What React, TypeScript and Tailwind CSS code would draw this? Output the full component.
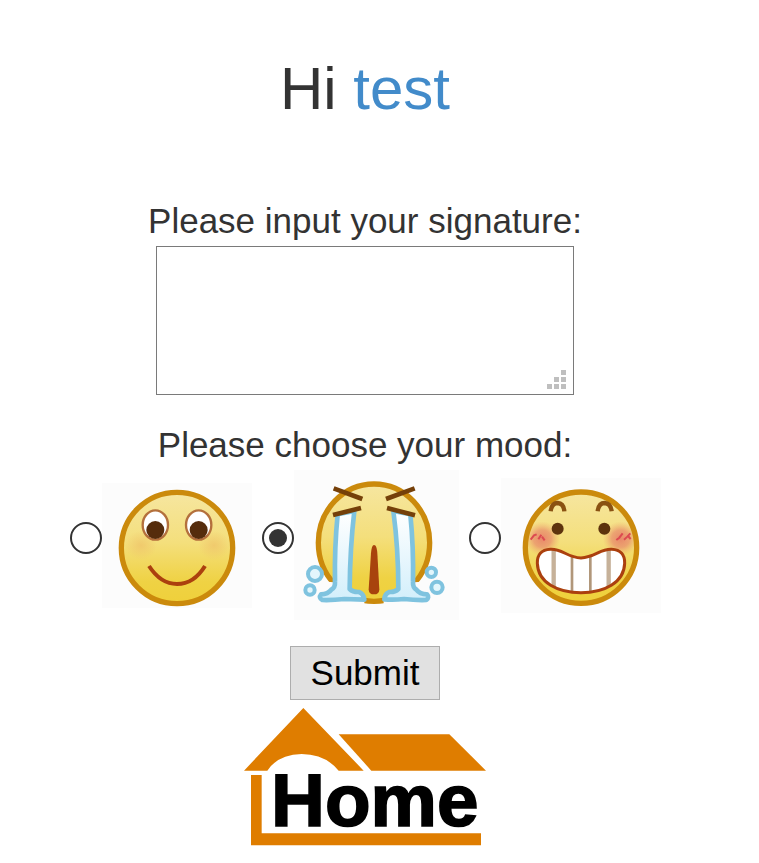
import { useState } from "react";
import type { ReactNode } from "react";

function FaceDefs({ id }: { id: string }) {
  return (
    <defs>
      <linearGradient id={`${id}-skin`} x1="0" y1="0" x2="0" y2="1">
        <stop offset="0" stopColor="#f6e6a0" />
        <stop offset="0.45" stopColor="#f4df7c" />
        <stop offset="0.8" stopColor="#efd244" />
        <stop offset="1" stopColor="#efd03a" />
      </linearGradient>
      <radialGradient id={`${id}-blush`}>
        <stop offset="0" stopColor="#e88368" stopOpacity="0.95" />
        <stop offset="0.5" stopColor="#e98f6c" stopOpacity="0.75" />
        <stop offset="1" stopColor="#f0b070" stopOpacity="0" />
      </radialGradient>
      <radialGradient id={`${id}-glow`}>
        <stop offset="0" stopColor="#efc56a" stopOpacity="0.8" />
        <stop offset="1" stopColor="#efc56a" stopOpacity="0" />
      </radialGradient>
      <linearGradient id={`${id}-tear`} x1="0" y1="0" x2="0" y2="1">
        <stop offset="0" stopColor="#ffffff" />
        <stop offset="1" stopColor="#d3effb" />
      </linearGradient>
    </defs>
  );
}

function SmileFace() {
  return (
    <svg viewBox="126 39 450 375" className="h-[125px] w-[150px] bg-[#fcfcfc]" role="img" aria-label="Happy">
      <FaceDefs id="smile" />
      <circle cx="351" cy="234" r="167" fill="url(#smile-skin)" stroke="#cb8a0c" strokeWidth="16" />
      <ellipse cx="243" cy="226" rx="48" ry="44" fill="url(#smile-glow)" />
      <ellipse cx="462" cy="226" rx="48" ry="44" fill="url(#smile-glow)" />
      {[286, 416].map((x) => (
        <g key={x}>
          <ellipse cx={x} cy="165" rx="38" ry="44" fill="#ffffff" stroke="#b4703c" strokeWidth="7" />
          <circle cx={x} cy="180" r="27" fill="#552c0c" />
        </g>
      ))}
      <path d="M267 288Q302 342 351 342Q402 342 435 288" fill="none" stroke="#ab400e" strokeWidth="12" />
    </svg>
  );
}

function CryFace() {
  return (
    <svg viewBox="117 15 495 450" className="h-[150px] w-[165px] bg-[#fcfcfc]" role="img" aria-label="Sad">
      <FaceDefs id="cry" />
      <ellipse cx="357" cy="233" rx="167" ry="176" fill="url(#cry-skin)" stroke="#cb8a0c" strokeWidth="16" />
      <path d="M186 348L236 352L240 390L192 390ZM478 352L535 348L530 390L474 390Z" fill="#fcfcfc" />
      <path d="M196 408H328V440H196ZM386 408H524V440H386Z" fill="#fcfcfc" />
      <g fill="url(#cry-tear)" stroke="#7fc3df" strokeWidth="14" strokeLinejoin="round">
        <path d="M248 148L298 138Q285 250 284 372Q294 382 312 381Q326 386 328 404Q300 403 268 402Q232 406 202 405Q190 398 198 388Q219 388 229 374Q241 368 240 350Q238 250 248 148Z" />
        <path d="M415 138L466 148Q476 250 474 350Q473 368 484 374Q494 388 516 388Q524 397 514 405Q482 406 447 402Q416 405 388 403Q389 386 403 381Q420 382 430 372Q430 250 415 138Z" />
      </g>
      <g fill="none" stroke="#754009" strokeWidth="14">
        <path d="M236 70L322 102M234 150L318 129" />
        <path d="M479 70L393 102M480 151L396 129" />
      </g>
      <path d="M357 240C363 240 366 250 367 265L373 374Q372 388 357 388Q342 388 341 374L348 265Q350 240 357 240Z" fill="#a8430d" />
      <g fill="#e3f6fc" stroke="#7fc3df" strokeWidth="12">
        <circle cx="180" cy="327" r="21" />
        <circle cx="165" cy="375" r="14" />
        <circle cx="529" cy="322" r="14" />
        <circle cx="546" cy="367" r="17" />
      </g>
    </svg>
  );
}

function GrinFace() {
  const mouth =
    "M360 264C318 262 304 236 268 238C241 239 228 255 229 280C231 338 290 368 360 368C430 368 489 338 491 280C492 255 479 239 452 238C418 236 402 262 360 264Z";
  return (
    <svg viewBox="120 24 480 405" className="h-[135px] w-[160px] bg-[#fcfcfc]" role="img" aria-label="Excited">
      <FaceDefs id="grin" />
      <circle cx="360" cy="233" r="167" fill="url(#grin-skin)" />
      <ellipse cx="244" cy="206" rx="54" ry="52" fill="url(#grin-blush)" />
      <ellipse cx="479" cy="206" rx="54" ry="52" fill="url(#grin-blush)" />
      <circle cx="360" cy="233" r="167" fill="none" stroke="#cb8a0c" strokeWidth="16" />
      <path
        d="M209 209L219 196L227 193M232 208L241 194M243 200L251 211M466 210L475 203L485 190M489 209L499 200L508 190M501 198L509 207"
        fill="none"
        stroke="#dc4a50"
        strokeWidth="6"
      />
      <g fill="none" stroke="#8a5212" strokeWidth="13">
        <path d="M269 124Q272 99 290 99Q308 100 310 124" />
        <path d="M410 124Q413 99 431 99Q449 100 452 124" />
      </g>
      <circle cx="290" cy="176" r="18" fill="#5d330d" />
      <circle cx="430" cy="176" r="18" fill="#5d330d" />
      <path d={mouth} fill="#ffffff" />
      <g stroke="#c6b199" strokeWidth="13">
        <path d="M278 240V350M443 240V350" />
        <path d="M333 256V364M388 256V364" strokeWidth="8" stroke="#b1977a" />
      </g>
      <path d={mouth} fill="none" stroke="#ab400e" strokeWidth="9" />
    </svg>
  );
}

function HomeLogo() {
  return (
    <svg viewBox="24 201 732 420" className="h-[140px] w-[244px]" role="img" aria-label="Home">
      <g fill="#df7d00">
        <path d="M205 204L386 392H311Q270 342 200 342Q128 344 97 392H27Z" />
        <path d="M311 283H643L753 392H409Z" />
        <path d="M48 405H80V580H738V616H48Z" />
      </g>
      <text
        x="108"
        y="559"
        fontSize="224"
        strokeWidth="5"
        className="fill-black stroke-black font-['Liberation_Sans',Arial,sans-serif] font-bold"
      >
        Home
      </text>
    </svg>
  );
}

const moods: { value: string; face: ReactNode }[] = [
  { value: "happy", face: <SmileFace /> },
  { value: "sad", face: <CryFace /> },
  { value: "excited", face: <GrinFace /> },
];

export default function App() {
  const [mood, setMood] = useState("sad");
  const [signature, setSignature] = useState("");

  return (
    <main className="flex flex-col items-center bg-white pt-14 pr-[29px] pb-4 font-['Liberation_Sans',Arial,sans-serif] text-[35px] leading-[50px] text-[#333333]">
      <h1 className="text-[60px] leading-[66px]">
        Hi <a href="#profile" className="text-[#428bca]">test</a>
      </h1>

      <form className="mt-[74px] flex flex-col items-center" onSubmit={(e) => e.preventDefault()}>
        <label htmlFor="signature">Please input your signature:</label>
        <div className="relative flex">
          <textarea
            id="signature"
            value={signature}
            onChange={(e) => setSignature(e.target.value)}
            className="h-[149px] w-[418px] resize-none border border-[#7a7a7a] bg-white px-2 outline-none"
          />
          <svg
            viewBox="0 0 19 19"
            className="pointer-events-none absolute right-2 bottom-1.5 size-[19px] fill-[#bfbfbf]"
            aria-hidden="true"
            shapeRendering="crispEdges"
          >
            <path d="M14 0h5v5h-5zM7 7h5v5H7zM14 7h5v5h-5zM0 14h5v5H0zM7 14h5v5H7zM14 14h5v5h-5z" />
          </svg>
        </div>

        <fieldset className="mt-[25px] flex flex-col items-center">
          <legend className="mx-auto">Please choose your mood:</legend>
          <div className="flex items-center gap-[10px]">
            {moods.map(({ value, face }) => (
              <label key={value} className="flex items-center">
                <input
                  type="radio"
                  name="mood"
                  value={value}
                  checked={mood === value}
                  onChange={() => setMood(value)}
                  className="mb-[14px] size-8 shrink-0 appearance-none rounded-full border-2 border-[#333333] bg-white bg-clip-content p-[5px] checked:bg-[#333333]"
                />
                {face}
              </label>
            ))}
          </div>
        </fieldset>

        <button type="submit" className="mt-[26px] h-[54px] border border-[#adadad] bg-[#e1e1e1] px-5 text-black">
          Submit
        </button>
      </form>

      <a href="#home" className="mt-[7px]">
        <HomeLogo />
      </a>
    </main>
  );
}
